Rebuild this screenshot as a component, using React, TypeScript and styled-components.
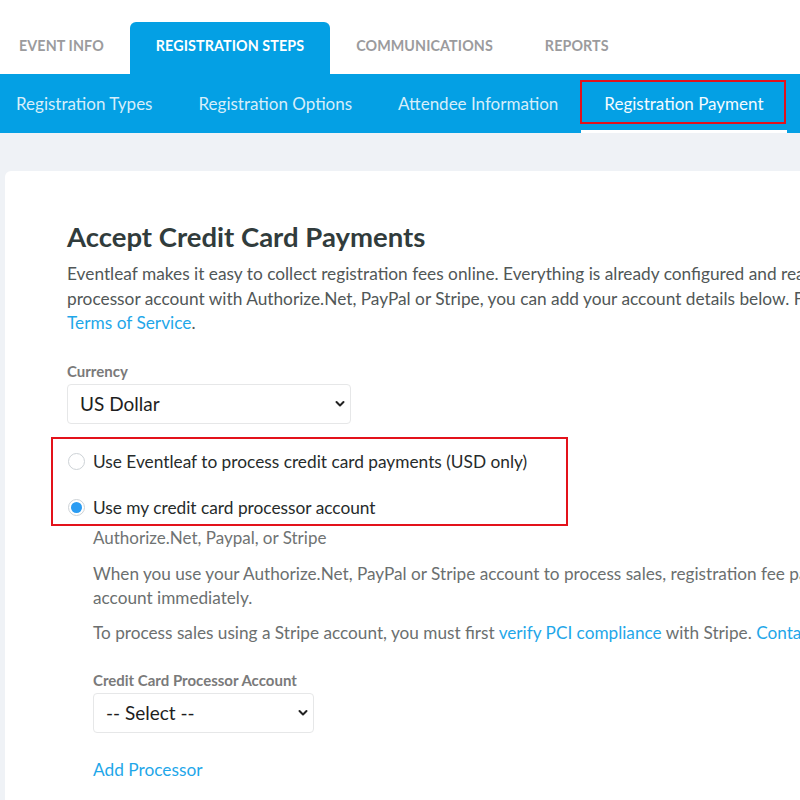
import React from "react";
import styled, { createGlobalStyle } from "styled-components";

const GlobalStyle = createGlobalStyle`
  html, body {
    margin: 0;
    padding: 0;
    overflow: hidden;
    background: #eff2f6;
  }
  body {
    font-family: Lato, "Open Sans", sans-serif;
    width: 800px;
    height: 800px;
  }
`;

const BLUE = "#04a0e4";
const LINK = "#1fa7e9";

const Page = styled.div`
  width: 800px;
  height: 800px;
  overflow: hidden;
  background: #eff2f6;
`;

const TopBar = styled.div`
  background: #fff;
  height: 74px;
  display: flex;
  align-items: flex-end;
`;

const Tabs = styled.div`
  display: flex;
  margin-left: -7px;
`;

const Tab = styled.div<{ $active?: boolean }>`
  height: 52px;
  padding: 0 26px 6px;
  box-sizing: border-box;
  display: flex;
  align-items: center;
  font-size: 14.3px;
  font-weight: 700;
  letter-spacing: 0.1px;
  text-transform: uppercase;
  color: ${(p) => (p.$active ? "#fff" : "#9b9b9d")};
  background: ${(p) => (p.$active ? BLUE : "transparent")};
  border-radius: 6px 6px 0 0;
  white-space: nowrap;
`;

const SubBar = styled.div`
  background: ${BLUE};
  height: 59px;
  display: flex;
`;

const SubItems = styled.div`
  display: flex;
  margin-left: -7px;
`;

const SubItem = styled.div<{ $active?: boolean }>`
  position: relative;
  padding: 0 23px;
  display: flex;
  align-items: center;
  font-size: 17px;
  color: ${(p) => (p.$active ? "#f4fbff" : "#d6eefa")};
  white-space: nowrap;
  border-bottom: 3px solid ${(p) => (p.$active ? "#fff" : "transparent")};
  box-sizing: border-box;
  height: 59px;
  padding-top: 2px;

  ${(p) =>
    p.$active &&
    `
    &::before {
      content: "";
      position: absolute;
      left: -1px;
      right: 1px;
      top: 6px;
      bottom: 6px;
      border: 2px solid #e3121b;
    }
  `}
`;

const Main = styled.div`
  padding: 38px 0 0 5px;
`;

const Card = styled.div`
  width: 1200px;
  background: #fff;
  border-radius: 6px;
  padding: 50px 0 40px 62px;
  box-sizing: border-box;
  height: 700px;
`;

const Heading = styled.h1`
  margin: 0;
  font-size: 27.5px;
  line-height: 32px;
  font-weight: 700;
  color: #313c3c;
`;

const Intro = styled.p`
  margin: 9px 0 0;
  font-size: 17.3px;
  line-height: 24.5px;
  color: #515757;
  white-space: nowrap;
`;

const Link = styled.a`
  color: ${LINK};
  text-decoration: none;
`;

const Label = styled.div<{ $top: number }>`
  margin-top: ${(p) => p.$top}px;
  font-size: 15px;
  line-height: 18px;
  font-weight: 700;
  color: #7a7a7a;
`;

const SelectWrap = styled.div<{ $width: number }>`
  position: relative;
  width: ${(p) => p.$width}px;
  margin-top: 4px;
`;

const Select = styled.select`
  appearance: none;
  -webkit-appearance: none;
  width: 100%;
  height: 40px;
  border: 1px solid #e6e7e8;
  border-radius: 4px;
  background: #fff;
  padding: 0 12px;
  font-family: inherit;
  font-size: 19px;
  color: #1e1e1e;
  outline: none;
`;

const Chevron = styled.svg`
  position: absolute;
  right: 6px;
  top: 16px;
  pointer-events: none;
`;

const RadioBox = styled.div`
  margin: 13px 0 0 -16px;
  width: 517px;
  height: 89px;
  box-sizing: border-box;
  border: 2px solid #e3121b;
  padding: 8px 0 0 15px;
  display: flex;
  flex-direction: column;
  gap: 16px;
`;

const RadioRow = styled.label`
  display: flex;
  align-items: center;
  gap: 8px;
  height: 30px;
  font-size: 17.3px;
  color: #262b2b;
  white-space: nowrap;
`;

const Radio = styled.span<{ $checked?: boolean }>`
  width: 17px;
  height: 17px;
  border-radius: 50%;
  border: 1px solid #cdd2d6;
  box-sizing: border-box;
  background: #fff;
  display: flex;
  align-items: center;
  justify-content: center;

  &::after {
    content: "";
    width: 11px;
    height: 11px;
    border-radius: 50%;
    background: ${(p) => (p.$checked ? "#2b9cf2" : "transparent")};
  }
`;

const Details = styled.div`
  margin-left: 26px;
`;

const Sub = styled.div`
  margin-top: 1px;
  font-size: 17px;
  line-height: 22px;
  color: #6f7373;
`;

const Text = styled.p<{ $top: number }>`
  margin: ${(p) => p.$top}px 0 0;
  font-size: 17.2px;
  line-height: 24px;
  color: #6b6f6f;
  white-space: nowrap;
`;

const AddLink = styled.a`
  display: block;
  margin-top: 25px;
  font-size: 17.3px;
  line-height: 24px;
  color: ${LINK};
  text-decoration: none;
`;

const ChevronIcon = () => (
  <Chevron width="10" height="8" viewBox="0 0 10 8">
    <path d="M1.5 2 L5 5.5 L8.5 2" fill="none" stroke="#222" strokeWidth="2" strokeLinecap="round" strokeLinejoin="round" />
  </Chevron>
);

const tabs = ["Event Info", "Registration Steps", "Communications", "Reports"];
const steps = ["Registration Types", "Registration Options", "Attendee Information", "Registration Payment"];

const App = () => {
  return (
    <Page>
      <GlobalStyle />
      <TopBar>
        <Tabs>
          {tabs.map((t) => (
            <Tab key={t} $active={t === "Registration Steps"}>
              {t}
            </Tab>
          ))}
        </Tabs>
      </TopBar>
      <SubBar>
        <SubItems>
          {steps.map((s) => (
            <SubItem key={s} $active={s === "Registration Payment"}>
              {s}
            </SubItem>
          ))}
        </SubItems>
      </SubBar>
      <Main>
        <Card>
          <Heading>Accept Credit Card Payments</Heading>
          <Intro>
            Eventleaf makes it easy to collect registration fees online. Everything is already configured and ready to go. If you have a credit card
            <br />
            processor account with Authorize.Net, PayPal or Stripe, you can add your account details below. For more information, see our
            <br />
            <Link href="#">Terms of Service</Link>.
          </Intro>

          <Label $top={26}>Currency</Label>
          <SelectWrap $width={284}>
            <Select defaultValue="usd">
              <option value="usd">US Dollar</option>
            </Select>
            <ChevronIcon />
          </SelectWrap>

          <RadioBox>
            <RadioRow>
              <Radio />
              Use Eventleaf to process credit card payments (USD only)
            </RadioRow>
            <RadioRow>
              <Radio $checked />
              Use my credit card processor account
            </RadioRow>
          </RadioBox>

          <Details>
            <Sub>Authorize.Net, Paypal, or Stripe</Sub>
            <Text $top={13}>
              When you use your Authorize.Net, PayPal or Stripe account to process sales, registration fee payments are deposited into your
              <br />
              account immediately.
            </Text>
            <Text $top={11}>
              To process sales using a Stripe account, you must first <Link href="#">verify PCI compliance</Link> with Stripe.{" "}
              <Link href="#">Contact us</Link> if you have questions.
            </Text>

            <Label $top={26}>Credit Card Processor Account</Label>
            <SelectWrap $width={221}>
              <Select defaultValue="">
                <option value="">-- Select --</option>
              </Select>
              <ChevronIcon />
            </SelectWrap>

            <AddLink href="#">Add Processor</AddLink>
          </Details>
        </Card>
      </Main>
    </Page>
  );
};

export default App;
